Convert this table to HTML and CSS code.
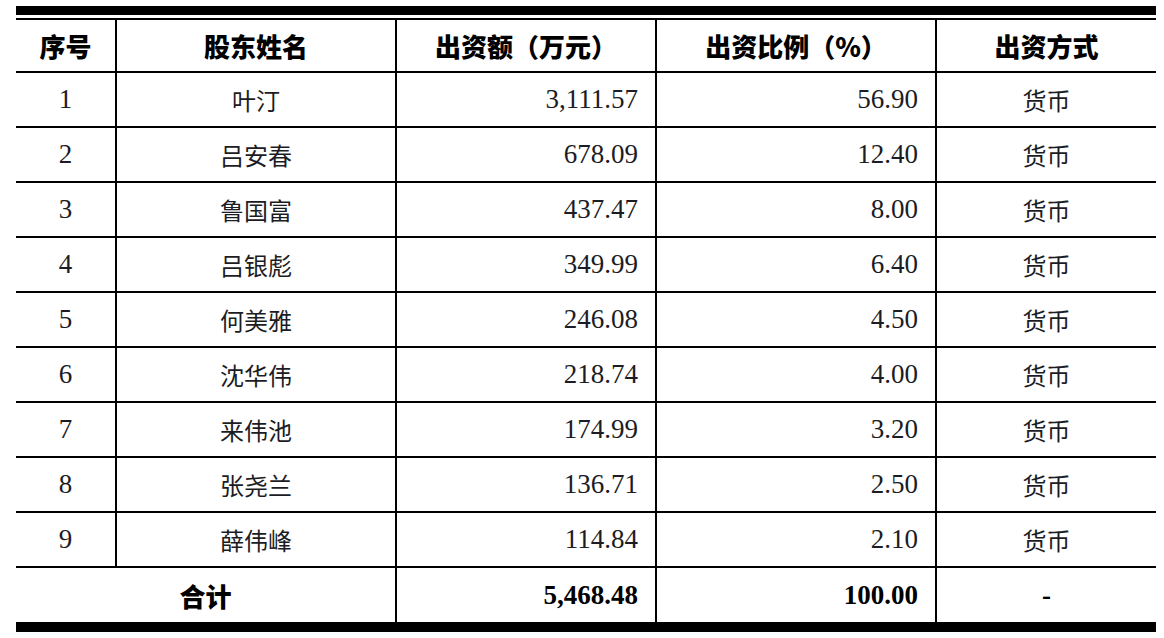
FILE: index.html
```html
<!DOCTYPE html>
<html lang="zh-CN">
<head>
<meta charset="utf-8">
<title>股东出资表</title>
<link rel="stylesheet" href="styles.css">
</head>
<body>
<div class="sheet">
  <div class="row head">
    <div class="cell c">序号</div>
    <div class="cell c">股东姓名</div>
    <div class="cell c">出资额（万元）</div>
    <div class="cell c">出资比例（%）</div>
    <div class="cell c">出资方式</div>
  </div>
  <div class="row"><div class="cell c num">1</div><div class="cell c zh">叶汀</div><div class="cell r num">3,111.57</div><div class="cell r num">56.90</div><div class="cell c zh">货币</div></div>
  <div class="row"><div class="cell c num">2</div><div class="cell c zh">吕安春</div><div class="cell r num">678.09</div><div class="cell r num">12.40</div><div class="cell c zh">货币</div></div>
  <div class="row"><div class="cell c num">3</div><div class="cell c zh">鲁国富</div><div class="cell r num">437.47</div><div class="cell r num">8.00</div><div class="cell c zh">货币</div></div>
  <div class="row"><div class="cell c num">4</div><div class="cell c zh">吕银彪</div><div class="cell r num">349.99</div><div class="cell r num">6.40</div><div class="cell c zh">货币</div></div>
  <div class="row"><div class="cell c num">5</div><div class="cell c zh">何美雅</div><div class="cell r num">246.08</div><div class="cell r num">4.50</div><div class="cell c zh">货币</div></div>
  <div class="row"><div class="cell c num">6</div><div class="cell c zh">沈华伟</div><div class="cell r num">218.74</div><div class="cell r num">4.00</div><div class="cell c zh">货币</div></div>
  <div class="row"><div class="cell c num">7</div><div class="cell c zh">来伟池</div><div class="cell r num">174.99</div><div class="cell r num">3.20</div><div class="cell c zh">货币</div></div>
  <div class="row"><div class="cell c num">8</div><div class="cell c zh">张尧兰</div><div class="cell r num">136.71</div><div class="cell r num">2.50</div><div class="cell c zh">货币</div></div>
  <div class="row"><div class="cell c num">9</div><div class="cell c zh">薛伟峰</div><div class="cell r num">114.84</div><div class="cell r num">2.10</div><div class="cell c zh">货币</div></div>
  <div class="row total">
    <div class="cell c span2 bold-zh">合计</div>
    <div class="cell r num bold">5,468.48</div>
    <div class="cell r num bold">100.00</div>
    <div class="cell c num bold">-</div>
  </div>
</div>
</body>
</html>
```
FILE: styles.css
```css
html, body {
  margin: 0;
  padding: 0;
  background: #ffffff;
}
body {
  padding-top: 6px;
}
.sheet {
  margin-left: 16px;
  width: 1140px;
  border-top: 9px solid #000;
  padding-top: 3px;
  border-bottom: 10px solid #000;
  color: #1c1c24;
}
.row {
  display: grid;
  grid-template-columns: 99px 280px 260px 280px 221px;
  height: 55px;
  box-sizing: border-box;
  border-bottom: 2px solid #000;
}
.head {
  height: 55px;
  border-top: 2px solid #000;
  color: #000;
  font-family: "Noto Sans CJK SC", sans-serif;
  font-weight: 900;
  font-size: 26px;
}
.total {
  grid-template-columns: 379px 260px 280px 221px;
  height: 54px;
  border-bottom: none;
}
.cell {
  display: flex;
  align-items: center;
  border-left: 2px solid #000;
  box-sizing: border-box;
}
.cell:first-child {
  border-left: none;
}
.c {
  justify-content: center;
}
.r {
  justify-content: flex-end;
  padding-right: 17px;
}
.num {
  font-family: "Liberation Serif", "Times New Roman", serif;
  font-size: 27px;
}
.zh {
  font-family: "Noto Sans CJK SC", sans-serif;
  font-size: 24px;
  font-weight: 400;
}
.bold {
  font-weight: 700;
  color: #000;
}
.bold-zh {
  font-family: "Noto Sans CJK SC", sans-serif;
  font-size: 26px;
  font-weight: 900;
  color: #000;
}
```
